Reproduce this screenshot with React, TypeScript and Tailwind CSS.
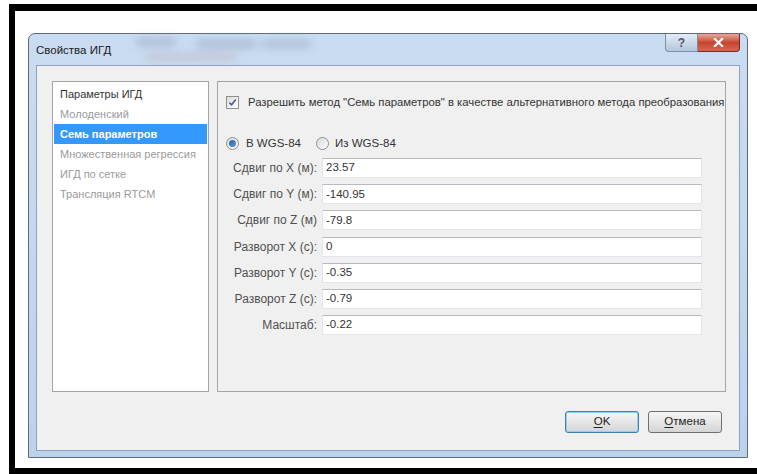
import React from "react";

const navItems = [
  { label: "Параметры ИГД", tone: "normal" },
  { label: "Молоденский", tone: "muted" },
  { label: "Семь параметров", tone: "active" },
  { label: "Множественная регрессия", tone: "muted" },
  { label: "ИГД по сетке", tone: "muted" },
  { label: "Трансляция RTCM", tone: "muted" },
];

const fields = [
  { label: "Сдвиг по X (м):", value: "23.57" },
  { label: "Сдвиг по Y (м):", value: "-140.95" },
  { label: "Сдвиг по Z (м)", value: "-79.8" },
  { label: "Разворот X (c):", value: "0" },
  { label: "Разворот Y (c):", value: "-0.35" },
  { label: "Разворот Z (c):", value: "-0.79" },
  { label: "Масштаб:", value: "-0.22" },
];

function Checkbox() {
  return (
    <span className="flex h-[13px] w-[13px] shrink-0 items-center justify-center border border-[#8e8f8f] bg-gradient-to-br from-[#dcdcdc] to-white">
      <svg viewBox="0 0 10 10" className="h-[9px] w-[9px]">
        <path d="M1.5 5.2 L4 7.6 L8.6 1.8" fill="none" stroke="#4a5f97" strokeWidth="1.8" />
      </svg>
    </span>
  );
}

function Radio({ checked }: { checked?: boolean }) {
  return (
    <span className="flex h-[13px] w-[13px] shrink-0 items-center justify-center rounded-full border border-[#8e8f8f] bg-gradient-to-br from-[#d9d9d9] to-white">
      {checked && <span className="h-[7px] w-[7px] rounded-full bg-gradient-to-br from-[#2a5fa8] to-[#5c9ae0]" />}
    </span>
  );
}

function DialogButton({ children, focused }: { children: React.ReactNode; focused?: boolean }) {
  return (
    <button
      className={
        "flex h-[22px] w-[74px] items-center justify-center rounded-[3px] border bg-gradient-to-b from-[#f6f6f6] via-[#e6e6e6] to-[#d4d4d4] text-[11.5px] text-[#222] " +
        (focused ? "border-[#3c7fb1] shadow-[inset_0_0_0_1px_#8fd3f5]" : "border-[#707070]")
      }
    >
      {children}
    </button>
  );
}

export default function App() {
  return (
    <div className="h-[474px] w-[757px] bg-white pl-[9px] pt-[4px] font-['Liberation_Sans',Arial,sans-serif]">
      <div className="h-[470px] border-b-[6px] border-l-[6px] border-t-[7px] border-black pl-[13px] pt-[22px]">
        {/* window frame */}
        <div className="flex h-[425px] w-[720px] flex-col rounded-t-[7px] border border-[#5d6b7d] bg-gradient-to-b from-[#cadcf1] to-[#bcd3ec] px-[7px] pb-[6px]">
          {/* title bar, with the blurred glass behind it */}
          <div className="relative flex h-[31px] shrink-0 items-start">
            <span className="absolute left-[100px] top-[4px] h-[8px] w-[40px] rounded-full bg-[#7d8aa0] opacity-40 blur-[4px]" />
            <span className="absolute left-[160px] top-[6px] h-[8px] w-[60px] rounded-full bg-[#7d8aa0] opacity-40 blur-[4px]" />
            <span className="absolute left-[225px] top-[6px] h-[8px] w-[50px] rounded-full bg-[#7d8aa0] opacity-35 blur-[4px]" />
            <span className="absolute left-[110px] top-[20px] h-[6px] w-[90px] rounded-full bg-[#b08080] opacity-30 blur-[4px]" />
            <span className="relative pt-[8px] text-[11.5px] text-[#1b1b1b]">Свойства ИГД</span>
            <div className="relative ml-auto flex">
              <span className="flex h-[18px] w-[33px] items-center justify-center rounded-bl-[4px] border border-t-0 border-[#7d8fa6] bg-gradient-to-b from-[#e4ecf6] to-[#b4c6dc] text-[12px] font-bold text-[#4b5a6e]">
                ?
              </span>
              <span className="flex h-[18px] w-[42px] items-center justify-center rounded-br-[4px] border border-l-0 border-t-0 border-[#7a2a20] bg-gradient-to-b from-[#e9a79b] via-[#c8432f] to-[#d06a50]">
                <svg viewBox="0 0 12 10" className="h-[9px] w-[11px]">
                  <path d="M2 1 L10 9 M10 1 L2 9" stroke="white" strokeWidth="2.4" strokeLinecap="square" />
                </svg>
              </span>
            </div>
          </div>

          {/* client area */}
          <div className="flex flex-1 flex-col border border-[#8aa2bf] bg-[#f0f0f0] pb-[17px] pl-[15px] pr-[13px] pt-[15px]">
            <div className="flex h-[311px] gap-[8px]">
              <div className="w-[157px] border border-[#a5a5a5] bg-white px-[1px] pt-[2px] text-[11px]">
                {navItems.map((item) => (
                  <div
                    key={item.label}
                    className={
                      "flex h-[20px] items-center whitespace-nowrap pl-[6px] " +
                      (item.tone === "active"
                        ? "bg-[#3399ff] font-bold text-white"
                        : item.tone === "muted"
                          ? "text-[#9a9a9a]"
                          : "text-[#333]")
                    }
                  >
                    {item.label}
                  </div>
                ))}
              </div>

              <div className="flex flex-1 flex-col overflow-hidden border border-[#a5a5a5] pl-[8px] pr-[23px] text-[#333]">
                <div className="mt-[12px] flex items-center gap-[9px] whitespace-nowrap">
                  <Checkbox />
                  <span className="text-[11.3px]">
                    Разрешить метод "Семь параметров" в качестве альтернативного метода преобразования
                  </span>
                </div>

                <div className="mt-[26px] flex h-[14px] items-center text-[11.5px]">
                  <Radio checked />
                  <span className="ml-[7px] w-[70px]">В WGS-84</span>
                  <Radio />
                  <span className="ml-[6px]">Из WGS-84</span>
                </div>

                <div className="mt-[7px] grid grid-cols-[91px_1fr] gap-x-[5px] gap-y-[6.2px]">
                  {fields.map((f) => (
                    <React.Fragment key={f.label}>
                      <span className="flex h-[20px] items-center justify-end whitespace-nowrap text-[12px] text-[#505050]">
                        {f.label}
                      </span>
                      <div className="flex h-[20px] items-center border border-[#e1e6ec] border-t-[#b6b9bf] bg-white pl-[3px] text-[11.5px] text-[#333]">
                        {f.value}
                      </div>
                    </React.Fragment>
                  ))}
                </div>
              </div>
            </div>

            <div className="mt-auto flex justify-end gap-[9px] pr-[4px]">
              <DialogButton focused>
                <span className="underline underline-offset-2">O</span>K
              </DialogButton>
              <DialogButton>
                <span className="underline underline-offset-2">О</span>тмена
              </DialogButton>
            </div>
          </div>
        </div>
      </div>
    </div>
  );
}
